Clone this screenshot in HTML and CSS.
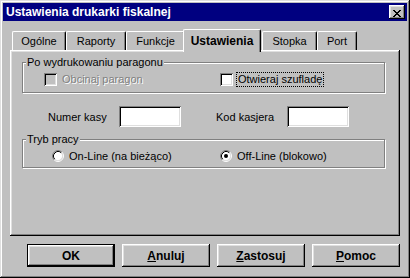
FILE: index.html
```html
<!DOCTYPE html>
<html lang="pl">
<head>
<meta charset="utf-8">
<title>Ustawienia drukarki fiskalnej</title>
<link rel="stylesheet" href="styles.css">
</head>
<body>
<div class="window">
  <div class="titlebar">
    <span class="title">Ustawienia drukarki fiskalnej</span>
    <button class="close" aria-label="Zamknij">
      <svg width="8" height="7" viewBox="0 0 8 7" shape-rendering="crispEdges"><path fill="#000" d="M0 0h2v1H0zM6 0h2v1H6zM1 1h2v1H1zM5 1h2v1H5zM2 2h4v1H2zM3 3h2v1H3zM2 4h4v1H2zM1 5h2v1H1zM5 5h2v1H5zM0 6h2v1H0zM6 6h2v1H6z"/></svg>
    </button>
  </div>
  <div class="content">
    <div class="tabs">
      <div class="tab tab-ogolne">Ogólne</div>
      <div class="tab tab-raporty">Raporty</div>
      <div class="tab tab-funkcje">Funkcje</div>
      <div class="tab tab-active">Ustawienia</div>
      <div class="tab tab-stopka">Stopka</div>
      <div class="tab tab-port">Port</div>
    </div>
    <div class="panel">
      <fieldset class="group group-print">
        <legend>Po wydrukowaniu paragonu</legend>
        <div class="row row-checks">
          <label class="check check-first check-disabled"><span class="box"></span><span class="caption">Obcinaj paragon</span></label>
          <label class="check check-focus"><span class="box"></span><span class="caption">Otwieraj szufladę</span></label>
        </div>
      </fieldset>
      <div class="fields">
        <div class="field"><span class="field-label">Numer kasy</span><span class="edit"></span></div>
        <div class="field field-second"><span class="field-label">Kod kasjera</span><span class="edit"></span></div>
      </div>
      <fieldset class="group group-mode">
        <legend>Tryb pracy</legend>
        <div class="row row-radios">
          <label class="radio radio-first">
            <svg class="radio-icon" width="12" height="12" viewBox="0 0 12 12"><circle cx="6" cy="6" r="4.5" fill="#fff"/><path d="M2.11 9.89A5.5 5.5 0 0 1 9.89 2.11" fill="none" stroke="#808080"/><path d="M9.89 2.11A5.5 5.5 0 0 1 2.11 9.89" fill="none" stroke="#fff"/><path d="M2.82 9.18A4.5 4.5 0 0 1 9.18 2.82" fill="none" stroke="#000"/><path d="M9.18 2.82A4.5 4.5 0 0 1 2.82 9.18" fill="none" stroke="#dfdfdf"/></svg>
            <span class="caption">On-Line (na bieżąco)</span>
          </label>
          <label class="radio">
            <svg class="radio-icon" width="12" height="12" viewBox="0 0 12 12"><circle cx="6" cy="6" r="4.5" fill="#fff"/><path d="M2.11 9.89A5.5 5.5 0 0 1 9.89 2.11" fill="none" stroke="#808080"/><path d="M9.89 2.11A5.5 5.5 0 0 1 2.11 9.89" fill="none" stroke="#fff"/><path d="M2.82 9.18A4.5 4.5 0 0 1 9.18 2.82" fill="none" stroke="#000"/><path d="M9.18 2.82A4.5 4.5 0 0 1 2.82 9.18" fill="none" stroke="#dfdfdf"/><circle cx="6" cy="6" r="2" fill="#000"/></svg>
            <span class="caption">Off-Line (blokowo)</span>
          </label>
        </div>
      </fieldset>
    </div>
    <div class="buttons">
      <button class="btn btn-default">OK</button>
      <button class="btn"><u>A</u>nuluj</button>
      <button class="btn"><u>Z</u>astosuj</button>
      <button class="btn"><u>P</u>omoc</button>
    </div>
  </div>
</div>
</body>
</html>
```
FILE: styles.css
```css
* { box-sizing: border-box; }
html, body { margin: 0; padding: 0; }
body {
  background: #c0c0c0;
  font-family: "Liberation Sans", Arial, sans-serif;
  font-size: 11px;
  color: #000;
}
.window {
  width: 410px;
  height: 278px;
  padding: 3px;
  background: #c0c0c0;
  box-shadow: inset -1px -1px #000, inset 1px 1px #dfdfdf, inset -2px -2px #808080, inset 2px 2px #fff;
  display: flex;
  flex-direction: column;
}
.titlebar {
  height: 18px;
  background: #000080;
  display: flex;
  align-items: center;
  justify-content: space-between;
  padding-left: 3px;
}
.title {
  color: #fff;
  font-weight: bold;
  font-size: 12px;
  line-height: 14px;
}
.close {
  width: 16px;
  height: 14px;
  margin: 0 2px 0 0;
  padding: 3px 0 0 4px;
  border: 0;
  background: #c0c0c0;
  box-shadow: inset -1px -1px #000, inset 1px 1px #fff, inset -2px -2px #808080, inset 2px 2px #dfdfdf;
  display: block;
}
.close svg { display: block; }
.content {
  flex: 1;
  padding: 8px 7px;
  display: flex;
  flex-direction: column;
}
.tabs {
  height: 21px;
  display: flex;
  align-items: flex-end;
  padding-left: 2px;
}
.tab {
  height: 19px;
  padding-top: 3px;
  line-height: 13px;
  text-align: center;
  background: #c0c0c0;
  border-top: 1px solid #fff;
  border-left: 1px solid #fff;
  border-right: 1px solid #000;
  border-radius: 2px 2px 0 0;
  box-shadow: inset -1px 0 #808080;
}
.tab-ogolne { width: 54px; }
.tab-raporty { width: 60px; }
.tab-funkcje { width: 59px; }
.tab-stopka { width: 55px; }
.tab-port { width: 40px; }
.tab-active {
  position: relative;
  z-index: 1;
  width: 78px;
  height: 23px;
  margin: 0 1px -2px -2px;
  padding-top: 5px;
  font-weight: bold;
  font-size: 12px;
}
.panel {
  height: 186px;
  padding: 2px 15px 2px 12px;
  box-shadow: inset -1px -1px #000, inset 1px 1px #fff, inset -2px -2px #808080, inset 2px 2px #dfdfdf;
  display: flex;
  flex-direction: column;
}
.group {
  margin: 4px 0 0;
  padding: 0 0 6px;
  min-width: 0;
  border: 1px solid #808080;
  box-shadow: inset 1px 1px #fff, 1px 1px #fff;
}
.group legend {
  margin-left: 3px;
  padding: 0 1px;
  line-height: 13px;
  background: #c0c0c0;
}
.group-mode {
  margin-top: 6px;
  padding-bottom: 5px;
}
.row {
  display: flex;
  align-items: center;
  margin-top: 4px;
}
.row-checks { padding-left: 21px; height: 13px; }
.row-radios { padding-left: 29px; height: 12px; }
.check, .radio {
  display: flex;
  align-items: center;
}
.check-first { width: 176px; }
.radio-first { width: 168px; }
.box {
  width: 13px;
  height: 13px;
  background: #fff;
  box-shadow: inset 1px 1px #808080, inset -1px -1px #fff, inset 2px 2px #000, inset -2px -2px #dfdfdf;
}
.check-disabled .box { background: #c0c0c0; }
.check .caption {
  margin-left: 3px;
  padding: 0 1px;
  border: 1px solid transparent;
  line-height: 13px;
}
.check-disabled .caption {
  color: #808080;
  text-shadow: 1px 1px 0 #fff;
}
.check-focus .caption { border: 1px dotted #000; }
.radio-icon { display: block; }
.radio .caption {
  margin-left: 5px;
  line-height: 13px;
}
.fields {
  display: flex;
  align-items: center;
  height: 21px;
  margin-top: 13px;
  padding-left: 26px;
}
.field {
  display: flex;
  align-items: center;
}
.field-second { margin-left: 35px; }
.field-label { width: 71px; }
.edit {
  width: 62px;
  height: 21px;
  background: #fff;
  box-shadow: inset 1px 1px #808080, inset -1px -1px #fff, inset 2px 2px #000, inset -2px -2px #dfdfdf;
}
.buttons {
  margin-top: 8px;
  display: flex;
  justify-content: flex-end;
  gap: 7px;
}
.btn {
  width: 88px;
  height: 23px;
  padding: 0;
  border: 0;
  background: #c0c0c0;
  font-family: "Liberation Sans", Arial, sans-serif;
  font-size: 12px;
  font-weight: bold;
  color: #000;
  box-shadow: inset -1px -1px #000, inset 1px 1px #fff, inset -2px -2px #808080, inset 2px 2px #dfdfdf;
}
.btn-default {
  box-shadow: inset 0 0 0 1px #000, inset -2px -2px #000, inset 2px 2px #fff, inset -3px -3px #808080, inset 3px 3px #dfdfdf;
}
```
